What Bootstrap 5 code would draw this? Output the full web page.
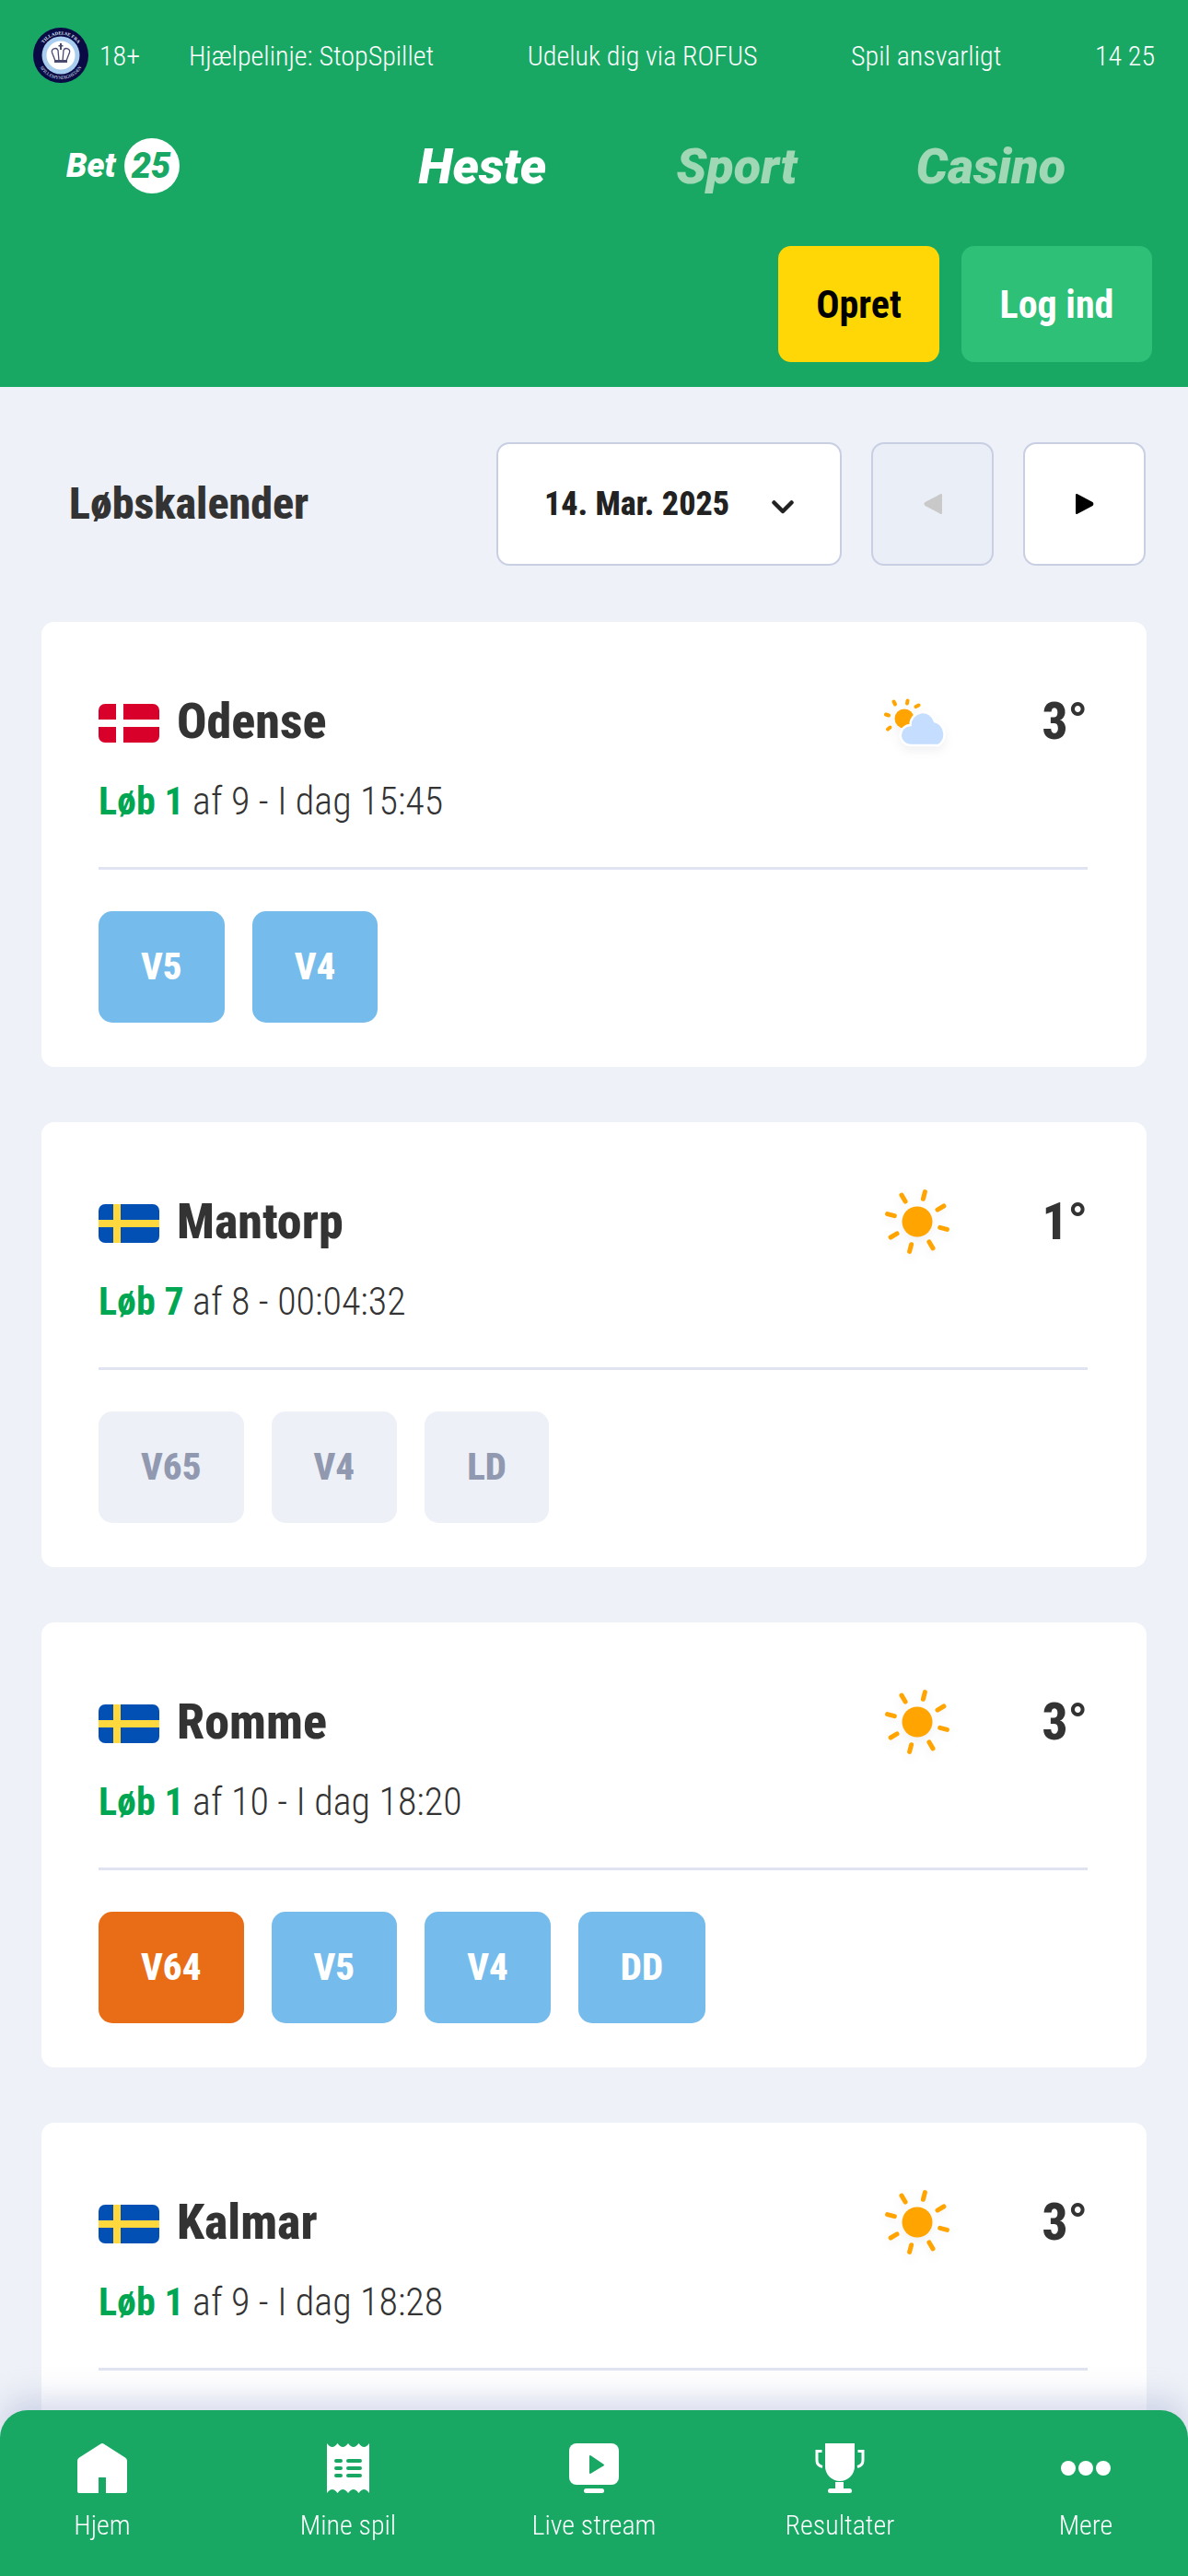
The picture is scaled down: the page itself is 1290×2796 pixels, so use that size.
<!DOCTYPE html>
<html lang="da">

<head>
    <meta charset="UTF-8">
    <meta name="viewport" content="width=device-width, initial-scale=1.0">
    <title>Bet25 - Løbskalender</title>
    <link href="https://cdn.jsdelivr.net/npm/bootstrap@5.3.0/dist/css/bootstrap.min.css" rel="stylesheet">
    <style>
        body {
            background: #eef1f7;
            font-family: "Roboto", "Liberation Sans", sans-serif;
            font-stretch: condensed;
            color: #333;
            overflow: hidden;
        }

        button {
            font-stretch: condensed;
        }

        .top-header {
            background: #19a864;
            height: 420px;
            color: #fff;
        }

        .info-row {
            height: 60px;
            margin: 0 36px;
            padding-top: 30px;
            box-sizing: content-box;
            font-size: 30px;
            font-weight: 300;
        }

        .info-links {
            gap: 101.5px;
        }

        .age-limit {
            margin-left: 12px;
        }

        .brand-row {
            height: 60px;
            margin: 60px 76px 0 72px;
        }

        .brand-tab {
            width: 276px;
            text-align: center;
            font-size: 54px;
            font-stretch: normal;
            font-weight: 900;
            font-style: italic;
            color: #a0d7b5;
            text-decoration: none;
        }

        .brand-tab.is-active {
            color: #fff;
        }

        .logo-text {
            font-stretch: normal;
            font-weight: 900;
            font-style: italic;
        }

        .auth-row {
            margin: 57px 39px 0 0;
            gap: 24px;
        }

        .auth-btn {
            height: 126px;
            border: 0;
            border-radius: 14px;
            font-size: 42px;
            font-weight: 700;
            padding: 0;
        }

        .auth-create {
            width: 175px;
            background: #ffd706;
            color: #000;
        }

        .auth-login {
            width: 207px;
            background: #2ec077;
            color: #fff;
        }

        .race-list {
            padding: 60px 45px 0;
        }

        .calendar-title {
            margin: 0 0 0 30px;
            font-size: 48px;
            font-weight: 800;
        }

        .calendar-bar {
            margin-bottom: 61px;
            padding-right: 1px;
        }

        .date-select,
        .step-btn {
            height: 134px;
            border: 2px solid #c9cfe3;
            border-radius: 14px;
            background: #fff;
            padding: 0;
        }

        .date-select {
            width: 375px;
            margin-right: 32px;
            font-size: 36px;
            font-weight: 800;
            color: #222;
            gap: 46px;
        }

        .date-select svg {
            margin-top: 6px;
        }

        .step-btn {
            width: 133px;
        }

        .step-btn.is-off {
            background: #eaeef7;
            margin-right: 32px;
        }

        .race-card {
            height: 483px;
            margin-bottom: 60px;
            border: 0;
            border-radius: 14px;
            padding: 78px 64px 0 62px;
        }

        .race-head {
            height: 60px;
        }

        .race-flag {
            margin-top: 3px;
        }

        .race-name {
            margin: 0 0 0 19px;
            font-size: 54px;
            font-weight: 800;
            line-height: 60px;
            color: #333;
        }

        .race-temp {
            width: 120px;
            text-align: right;
            font-size: 55px;
            font-weight: 800;
            line-height: 60px;
            margin-left: 25px;
        }

        .weather-icon {
            width: 80px;
            height: 80px;
            filter: drop-shadow(0 5px 5px rgba(40, 50, 90, .07));
        }

        .race-info {
            margin-top: 32px;
            font-size: 42px;
            font-weight: 300;
            line-height: 50px;
        }

        .race-info strong {
            color: #00a651;
            font-weight: 700;
        }

        .race-rule {
            margin: 46px 0 0;
            border: 0;
            height: 3px;
            opacity: 1;
            background: #e0e3f1;
        }

        .chip-row {
            margin-top: 45px;
            gap: 30px;
        }

        .game-chip {
            height: 121px;
            padding: 0 46px;
            border-radius: 15px;
            font-size: 41px;
            font-weight: 800;
            background: #75bbeb;
            color: #fff;
        }

        .game-chip.is-jackpot {
            background: #e96d17;
        }

        .game-chip.is-closed {
            background: #edf0f6;
            color: #9199b0;
        }

        .tab-bar {
            position: fixed;
            left: 0;
            right: 0;
            bottom: 0;
            height: 180px;
            padding: 36px 36px 0;
            background: #19a864;
            border-radius: 30px 30px 0 0;
            box-shadow: 0 -14px 30px rgba(170, 180, 215, .45);
            color: #fff;
        }

        .tab-item {
            width: 150px;
            font-size: 30px;
            font-weight: 300;
            color: #fff;
            text-decoration: none;
            white-space: nowrap;
        }

        .tab-item svg {
            height: 54px;
            margin-bottom: 12px;
        }
    </style>
</head>

<body>
    <svg width="0" height="0" class="d-block">
        <defs>
            <g id="sun">
                <circle cx="40" cy="40" r="16.5" fill="#ffa400" />
                <g stroke="#ffa400" stroke-width="5" stroke-linecap="round">
                    <line x1="40" y1="14.500" x2="40" y2="6.500" transform="rotate(14.5 40 40)" />
                    <line x1="40" y1="14.500" x2="40" y2="6.500" transform="rotate(59.5 40 40)" />
                    <line x1="40" y1="14.500" x2="40" y2="6.500" transform="rotate(104.5 40 40)" />
                    <line x1="40" y1="14.500" x2="40" y2="6.500" transform="rotate(149.5 40 40)" />
                    <line x1="40" y1="14.500" x2="40" y2="6.500" transform="rotate(194.5 40 40)" />
                    <line x1="40" y1="14.500" x2="40" y2="6.500" transform="rotate(239.5 40 40)" />
                    <line x1="40" y1="14.500" x2="40" y2="6.500" transform="rotate(284.5 40 40)" />
                    <line x1="40" y1="14.500" x2="40" y2="6.500" transform="rotate(329.5 40 40)" />
                </g>
            </g>
            <g id="flag-se">
                <rect width="66" height="42" rx="7" fill="#0350b5" />
                <rect x="16" width="8" height="42" fill="#ffd83d" />
                <rect y="17" width="66" height="8" fill="#ffd83d" />
            </g>
        </defs>
    </svg>

    <header class="top-header">
        <div class="info-row d-flex align-items-center">
            <div class="d-flex align-items-center">
                <svg width="60" height="60" viewBox="0 0 60 60">
                    <defs>
                        <path id="seal-top" d="M7.500 30a22.500 22.500 0 0 1 45 0" />
                        <path id="seal-bottom" d="M4 30a26 26 0 0 0 52 0" />
                    </defs>
                    <circle cx="30" cy="30" r="30" fill="#0a0a45" />
                    <circle cx="30" cy="30" r="20.500" fill="#a9cdee" />
                    <circle cx="30" cy="30" r="15.500" fill="#fff" />
                    <text font-size="5" font-weight="700" fill="#dfe6f5" font-family="Liberation Serif, serif"><textPath href="#seal-top" startOffset="50%" text-anchor="middle">TILLADELSE FRA</textPath></text>
                    <text font-size="5" fill="#dfe6f5" font-family="Liberation Serif, serif"><textPath href="#seal-bottom" startOffset="50%" text-anchor="middle">SPILLEMYNDIGHEDEN</textPath></text>
                    <g fill="none" stroke="#4a4a70" stroke-width="1.300">
                        <path d="M24 36l-3.500-9a3.500 3.500 0 0 1 6.500-2.500l1 11.500M36 36l3.500-9a3.500 3.500 0 0 0-6.500-2.500l-1 11.500" />
                    </g>
                    <rect x="23" y="35" width="14" height="3" fill="#4a4a70" />
                    <rect x="29" y="17" width="2" height="7" fill="#4a4a70" />
                    <rect x="27.500" y="19" width="5" height="1.500" fill="#4a4a70" />
                </svg>
                <span class="age-limit">18+</span>
            </div>
            <div class="info-links d-flex ms-auto">
                <span>Hjælpelinje: StopSpillet</span>
                <span>Udeluk dig via ROFUS</span>
                <span>Spil ansvarligt</span>
                <span>14 25</span>
            </div>
        </div>

        <div class="brand-row d-flex align-items-center">
            <svg width="123" height="60" viewBox="0 0 123 60">
                <text class="logo-text" x="0" y="42" font-size="36" fill="#fff">Bet</text>
                <circle cx="93" cy="30" r="30" fill="#fff" />
                <text class="logo-text" x="92" y="43" text-anchor="middle" font-size="38" fill="#19a864">25</text>
            </svg>
            <nav class="d-flex ms-auto">
                <a class="brand-tab is-active" href="#">Heste</a>
                <a class="brand-tab" href="#">Sport</a>
                <a class="brand-tab" href="#">Casino</a>
            </nav>
        </div>

        <div class="auth-row d-flex justify-content-end">
            <button class="btn auth-btn auth-create">Opret</button>
            <button class="btn auth-btn auth-login">Log ind</button>
        </div>
    </header>

    <main class="race-list">
        <div class="calendar-bar d-flex align-items-center">
            <h2 class="calendar-title me-auto">Løbskalender</h2>
            <button class="date-select d-flex align-items-center justify-content-center">
                <span>14. Mar. 2025</span>
                <svg width="24" height="15" viewBox="0 0 24 15"><path d="M2.500 2.500 12 12l9.500-9.500" fill="none" stroke="#222" stroke-width="4.500" stroke-linecap="round" stroke-linejoin="round" /></svg>
            </button>
            <button class="step-btn is-off">
                <svg width="22" height="24" viewBox="0 0 22 24"><path d="M20 2v20L3 13a1.500 1.500 0 0 1 0-2z" fill="#c9c9c9" stroke="#c9c9c9" stroke-width="2" stroke-linejoin="round" /></svg>
            </button>
            <button class="step-btn">
                <svg width="22" height="24" viewBox="0 0 22 24"><path d="M2 2v20l17-9a1.500 1.500 0 0 0 0-2z" fill="#000" stroke="#000" stroke-width="2" stroke-linejoin="round" /></svg>
            </button>
        </div>

        <!-- Odense -->
        <article class="card race-card">
            <div class="race-head d-flex align-items-center">
                <svg class="race-flag" width="66" height="42" viewBox="0 0 66 42">
                    <rect width="66" height="42" rx="7" fill="#d8002b" />
                    <rect x="19" width="8" height="42" fill="#fff" />
                    <rect y="17" width="66" height="8" fill="#fff" />
                </svg>
                <h3 class="race-name me-auto">Odense</h3>
                <svg class="weather-icon" viewBox="0 0 80 80">
                    <circle cx="26" cy="37" r="10.500" fill="#ffa400" />
                    <g stroke="#ffa400" stroke-width="4" stroke-linecap="round">
                        <line x1="16" y1="21.500" x2="14.500" y2="18.500" />
                        <line x1="29" y1="20.500" x2="29.500" y2="17.500" />
                        <line x1="38.500" y1="24" x2="41.500" y2="22.500" />
                        <line x1="9" y1="33.500" x2="6" y2="32.500" />
                        <line x1="10.500" y1="46.500" x2="8" y2="48.500" />
                    </g>
                    <path d="M33 66A11 11 0 0 1 32.500 44A13.500 13.500 0 0 1 59 40 14.500 14.500 0 0 1 63 66z" fill="#c5deff" stroke="#fff" stroke-width="2.500" />
                </svg>
                <div class="race-temp">3°</div>
            </div>
            <div class="race-info"><strong>Løb 1</strong> af 9 - I dag 15:45</div>
            <hr class="race-rule">
            <div class="chip-row d-flex">
                <span class="game-chip d-flex align-items-center justify-content-center">V5</span>
                <span class="game-chip d-flex align-items-center justify-content-center">V4</span>
            </div>
        </article>

        <!-- Mantorp -->
        <article class="card race-card">
            <div class="race-head d-flex align-items-center">
                <svg class="race-flag" width="66" height="42" viewBox="0 0 66 42"><use href="#flag-se" /></svg>
                <h3 class="race-name me-auto">Mantorp</h3>
                <svg class="weather-icon" viewBox="0 0 80 80"><use href="#sun" /></svg>
                <div class="race-temp">1°</div>
            </div>
            <div class="race-info"><strong>Løb 7</strong> af 8 - 00:04:32</div>
            <hr class="race-rule">
            <div class="chip-row d-flex">
                <span class="game-chip is-closed d-flex align-items-center justify-content-center">V65</span>
                <span class="game-chip is-closed d-flex align-items-center justify-content-center">V4</span>
                <span class="game-chip is-closed d-flex align-items-center justify-content-center">LD</span>
            </div>
        </article>

        <!-- Romme -->
        <article class="card race-card">
            <div class="race-head d-flex align-items-center">
                <svg class="race-flag" width="66" height="42" viewBox="0 0 66 42"><use href="#flag-se" /></svg>
                <h3 class="race-name me-auto">Romme</h3>
                <svg class="weather-icon" viewBox="0 0 80 80"><use href="#sun" /></svg>
                <div class="race-temp">3°</div>
            </div>
            <div class="race-info"><strong>Løb 1</strong> af 10 - I dag 18:20</div>
            <hr class="race-rule">
            <div class="chip-row d-flex">
                <span class="game-chip is-jackpot d-flex align-items-center justify-content-center">V64</span>
                <span class="game-chip d-flex align-items-center justify-content-center">V5</span>
                <span class="game-chip d-flex align-items-center justify-content-center">V4</span>
                <span class="game-chip d-flex align-items-center justify-content-center">DD</span>
            </div>
        </article>

        <!-- Kalmar -->
        <article class="card race-card">
            <div class="race-head d-flex align-items-center">
                <svg class="race-flag" width="66" height="42" viewBox="0 0 66 42"><use href="#flag-se" /></svg>
                <h3 class="race-name me-auto">Kalmar</h3>
                <svg class="weather-icon" viewBox="0 0 80 80"><use href="#sun" /></svg>
                <div class="race-temp">3°</div>
            </div>
            <div class="race-info"><strong>Løb 1</strong> af 9 - I dag 18:28</div>
            <hr class="race-rule">
        </article>
    </main>

    <footer class="tab-bar d-flex justify-content-between">
        <a class="tab-item d-flex flex-column align-items-center" href="#">
            <svg width="54" viewBox="0 0 54 54"><path d="M25.500.5a3 3 0 0 1 3 0L52 15.500a4 4 0 0 1 2 3.500V52a2 2 0 0 1-2 2H31V37h-8v17H2a2 2 0 0 1-2-2V19a4 4 0 0 1 2-3.500z" fill="#fff" /></svg>
            <span>Hjem</span>
        </a>
        <a class="tab-item d-flex flex-column align-items-center" href="#">
            <svg width="46" viewBox="0 0 46 54">
                <path d="M0 0Q3 4 5.750 4T11.500 0Q14.500 4 17.250 4T23 0Q26 4 28.750 4T34.500 0Q37.500 4 40.250 4T46 0V54Q43 50 40.250 50T34.500 54Q31.500 50 28.750 50T23 54Q20 50 17.250 50T11.500 54Q8.500 50 5.750 50T0 54z" fill="#fff" />
                <g stroke="#19a864" stroke-width="4" stroke-linecap="round">
                    <path d="M10 19h5M23 19h13M10 27h5M23 27h13M10 35h5M23 35h13" />
                </g>
            </svg>
            <span>Mine spil</span>
        </a>
        <a class="tab-item d-flex flex-column align-items-center" href="#">
            <svg width="54" viewBox="0 0 54 54">
                <rect width="54" height="45" rx="8" fill="#fff" />
                <path d="M22 14v18a1 1 0 0 0 1.500.8l14-8.500a1 1 0 0 0 0-1.600l-14-9.500A1 1 0 0 0 22 14z" fill="#19a864" />
                <rect x="16" y="49" width="22" height="5" rx="2.500" fill="#fff" />
            </svg>
            <span>Live stream</span>
        </a>
        <a class="tab-item d-flex flex-column align-items-center" href="#">
            <svg width="54" viewBox="0 0 54 54">
                <path d="M11 0h32v25a16 16 0 0 1-32 0z" fill="#fff" />
                <path d="M7.500 8.500H2v10c0 3 2 6 6 7M46.500 8.500H52v10c0 3-2 6-6 7" fill="none" stroke="#fff" stroke-width="3" />
                <rect x="22" y="42" width="9" height="8" fill="#fff" />
                <rect x="14" y="49" width="26" height="5" rx="2.500" fill="#fff" />
            </svg>
            <span>Resultater</span>
        </a>
        <a class="tab-item d-flex flex-column align-items-center" href="#">
            <svg width="54" viewBox="0 0 54 54">
                <circle cx="8" cy="27" r="8" fill="#fff" />
                <circle cx="27" cy="27" r="8" fill="#fff" />
                <circle cx="46" cy="27" r="8" fill="#fff" />
            </svg>
            <span>Mere</span>
        </a>
    </footer>

    <script src="https://cdn.jsdelivr.net/npm/bootstrap@5.3.0/dist/js/bootstrap.bundle.min.js"></script>
</body>

</html>
